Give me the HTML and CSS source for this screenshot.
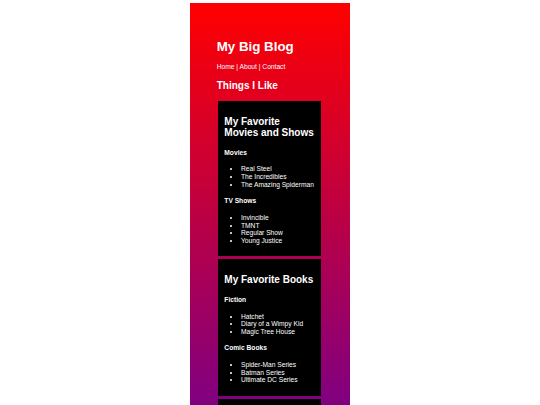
FILE: index.html
```html
<!DOCTYPE html>
<html lang="en">
<head>
<meta charset="utf-8">
<title>My Big Blog</title>
<link rel="stylesheet" href="styles.css">
</head>
<body>
<div class="page">
  <h1 class="title">My Big Blog</h1>
  <p class="nav"><a href="#">Home</a> | <a href="#">About</a> | <a href="#">Contact</a></p>
  <h2 class="section-title">Things I Like</h2>

  <div class="card">
    <h2 class="card-title">My Favorite Movies and Shows</h2>
    <h4 class="card-sub">Movies</h4>
    <ul class="card-list">
      <li>Real Steel</li>
      <li>The Incredibles</li>
      <li>The Amazing Spiderman</li>
    </ul>
    <h4 class="card-sub">TV Shows</h4>
    <ul class="card-list">
      <li>Invincible</li>
      <li>TMNT</li>
      <li>Regular Show</li>
      <li>Young Justice</li>
    </ul>
  </div>

  <div class="card">
    <h2 class="card-title">My Favorite Books</h2>
    <h4 class="card-sub">Fiction</h4>
    <ul class="card-list">
      <li>Hatchet</li>
      <li>Diary of a Wimpy Kid</li>
      <li>Magic Tree House</li>
    </ul>
    <h4 class="card-sub">Comic Books</h4>
    <ul class="card-list">
      <li>Spider-Man Series</li>
      <li>Batman Series</li>
      <li>Ultimate DC Series</li>
    </ul>
  </div>

  <div class="card">
    <h2 class="card-title">My Favorite Games</h2>
    <h4 class="card-sub">Video Games</h4>
    <ul class="card-list">
      <li>Minecraft</li>
      <li>Lego Star Wars</li>
    </ul>
  </div>
</div>
</body>
</html>
```

FILE: styles.css
```css
html, body {
  margin: 0;
  padding: 0;
  background: #ffffff;
}

body {
  font-family: "Liberation Sans", Arial, sans-serif;
  font-size: 6.667px;
  line-height: 1.15;
  color: #ffffff;
}

.page {
  width: 106.67px;
  margin: 3.33px auto 0;
  padding: 26.67px 26.67px 10px;
  background: linear-gradient(to bottom, #ff0000 0, #800080 402px);
}

.title {
  font-size: 13.333px;
  font-weight: bold;
  margin: 8.93px 0;
}

.nav {
  margin: 6.67px 0;
}

.nav a {
  color: #ffffff;
  text-decoration: none;
}

.section-title {
  font-size: 10px;
  font-weight: bold;
  margin: 9px 0 9.3px;
}

.card {
  background: #000000;
  margin: 0 2px 3px 1.67px;
  padding: 7px 5.67px 5px 6px;
}

.card-title {
  font-size: 10px;
  font-weight: bold;
  margin: 8.3px 0 10px;
}

.card-sub {
  font-size: 6.667px;
  font-weight: bold;
  margin: 8.87px 0;
}

.card-list {
  margin: 6.67px 0;
  padding-left: 16.67px;
}
```
